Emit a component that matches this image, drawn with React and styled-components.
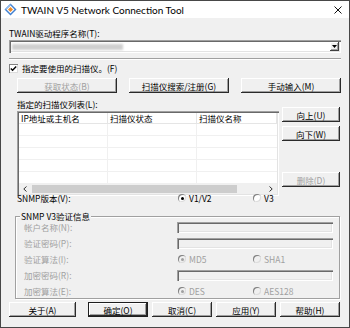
import styled, { createGlobalStyle } from "styled-components";

const GlobalStyle = createGlobalStyle`
  body {
    margin: 0;
    background: #fff;
  }
  * {
    box-sizing: border-box;
  }
`;

const Window = styled.div`
  width: 350px;
  height: 328px;
  border: 1px solid #474747;
  background: #f0f0f0;
  display: flex;
  flex-direction: column;
  font-family: "Noto Sans CJK SC", "Noto Sans", sans-serif;
  font-size: 8.5px;
  line-height: 10px;
  color: #000;
  overflow: hidden;
`;

const TitleBar = styled.div`
  height: 17px;
  flex-shrink: 0;
  background: #fff;
  display: flex;
  align-items: center;
  padding: 0 7px 0 3px;
`;

const Title = styled.div`
  flex: 1;
  margin-left: 4px;
  font-family: Lato, "Liberation Sans", sans-serif;
  font-size: 10px;
  line-height: 12px;
  color: #000;
`;

const Client = styled.div`
  flex: 1;
  display: flex;
  flex-direction: column;
  padding: 0 8px;
`;

const Label = styled.div`
  height: 10px;
  margin-top: ${(p) => p.$top || 0}px;
  padding-left: ${(p) => p.$indent || 0}px;
  color: ${(p) => (p.$disabled ? "#a0a0a0" : "#000")};
  white-space: nowrap;
`;

const Combo = styled.div`
  margin-top: 2px;
  height: 13px;
  background: #fff;
  display: flex;
  align-items: center;
  padding: 0 2px 0 3px;
  box-shadow: inset 1px 1px #a0a0a0, inset 2px 2px #696969,
    inset -1px -1px #fff, inset -2px -2px #e3e3e3;
`;

const Redacted = styled.div`
  width: 111px;
  height: 6px;
  background: #cfcfcf;
  filter: blur(0.8px);
`;

const DropButton = styled.div`
  margin-left: auto;
  width: 9px;
  height: 9px;
  background: #f0f0f0;
  display: flex;
  align-items: center;
  justify-content: center;
  box-shadow: inset -1px -1px #404040, inset 1px 1px #fff,
    inset -2px -2px #a0a0a0;
`;

const Separator = styled.div`
  margin-top: 5px;
  height: 2px;
  border-top: 1px solid #a0a0a0;
  border-bottom: 1px solid #fff;
`;

const CheckRow = styled.div`
  margin-top: 3px;
  height: 10px;
  display: flex;
  align-items: center;
  gap: 4px;
`;

const CheckBox = styled.div`
  width: 9px;
  height: 9px;
  background: #fff;
  display: flex;
  align-items: center;
  justify-content: center;
  box-shadow: inset 1px 1px #808080, inset -1px -1px #dcdcdc;
`;

const ButtonRow = styled.div`
  margin-top: 5px;
  padding-left: 8px;
  display: flex;
  gap: 12px;
`;

const Button = styled.div`
  width: ${(p) => p.$w}px;
  height: 15px;
  flex-shrink: 0;
  display: flex;
  align-items: center;
  justify-content: center;
  background: #f0f0f0;
  color: ${(p) => (p.$disabled ? "#a0a0a0" : "#000")};
  white-space: nowrap;
  border: ${(p) => (p.$default ? "1px solid #1e1e1e" : "none")};
  box-shadow: inset -1px -1px #2a2a2a, inset 1px 1px #fff,
    inset -2px -2px #a0a0a0;
`;

const ListSection = styled.div`
  margin-top: 6px;
  display: flex;
  height: 88px;
`;

const ListColumn = styled.div`
  flex: 1;
  padding-left: 8px;
  display: flex;
  flex-direction: column;
`;

const ListView = styled.div`
  margin-top: 2px;
  flex: 1;
  background: #fff;
  padding: 2px;
  display: flex;
  flex-direction: column;
  box-shadow: inset 1px 1px #a0a0a0, inset 2px 2px #696969,
    inset -1px -1px #fff, inset -2px -2px #e3e3e3;
`;

const HeaderRow = styled.div`
  display: grid;
  grid-template-columns: 89px 89px 1fr;
  height: 11px;
  flex-shrink: 0;
  border-bottom: 1px solid #e5e5e5;
`;

const HeaderCell = styled.div`
  padding-left: 2px;
  border-right: 1px solid #e5e5e5;
  white-space: nowrap;
`;

const RowArea = styled.div`
  flex: 1;
  overflow: hidden;
`;

const Row = styled.div`
  display: grid;
  grid-template-columns: 89px 89px 1fr;
  height: 12px;
  border-bottom: 1px solid #f0f0f0;
`;

const Cell = styled.div`
  border-right: 1px solid #f0f0f0;
`;

const ScrollBar = styled.div`
  height: 10px;
  flex-shrink: 0;
  background: #f0f0f0;
  display: flex;
  align-items: center;
  padding: 0 4px;
  gap: 5px;
`;

const Thumb = styled.div`
  width: 205px;
  height: 8px;
  background: #cdcdcd;
`;

const SideColumn = styled.div`
  width: 58px;
  margin: 0 1px 0 3px;
  padding-top: 8px;
  display: flex;
  flex-direction: column;
  gap: 4px;
`;

const Spacer = styled.div`
  flex: 1;
`;

const SnmpRow = styled.div`
  margin-top: 6px;
  height: 10px;
  padding-left: 8px;
  display: grid;
  grid-template-columns: 161px 75px 1fr;
  align-items: center;
`;

const RadioItem = styled.div`
  display: flex;
  align-items: center;
  gap: 3px;
  color: ${(p) => (p.$disabled ? "#a0a0a0" : "#000")};
  white-space: nowrap;
`;

const RadioDot = styled.div`
  width: 8px;
  height: 8px;
  border-radius: 50%;
  background: ${(p) => (p.$disabled ? "#f0f0f0" : "#fff")};
  box-shadow: inset 1px 1px #808080, inset -1px -1px #dcdcdc;
  display: flex;
  align-items: center;
  justify-content: center;
  &::after {
    content: "";
    width: 3px;
    height: 3px;
    border-radius: 50%;
    background: ${(p) =>
      p.$checked ? (p.$disabled ? "#a0a0a0" : "#000") : "transparent"};
  }
`;

const GroupBox = styled.fieldset`
  margin: 8px 1px 0 6px;
  padding: 0 6px 1px 3px;
  min-width: 0;
  border: 1px solid #a0a0a0;
  box-shadow: inset 1px 1px #fff, 1px 1px #fff;
`;

const Legend = styled.legend`
  padding: 0 1px;
  margin-left: 1px;
  height: 10px;
  line-height: 10px;
  background: #f0f0f0;
`;

const GroupGrid = styled.div`
  margin-top: 0;
  padding-left: 5px;
  display: grid;
  grid-template-columns: 153px 1fr;
  grid-auto-rows: 12px;
  row-gap: 4px;
  align-items: center;
`;

const TextBox = styled.div`
  height: 11px;
  background: #f0f0f0;
  box-shadow: inset 1px 1px #a0a0a0, inset 2px 2px #696969,
    inset -1px -1px #fff, inset -2px -2px #e3e3e3;
`;

const RadioPair = styled.div`
  display: grid;
  grid-template-columns: 75px 1fr;
  padding-left: 1px;
`;

const Footer = styled.div`
  margin-top: 3px;
  display: flex;
  gap: 4px;
`;

const TwainIcon = () => (
  <svg width="13" height="13" viewBox="0 0 13 13">
    <path d="M6.5 0.5 L12.5 6.5 L6.5 12.5 L0.5 6.5 Z" fill="#3f7fd0" />
    <path d="M6.5 2.5 L10.5 6.5 L6.5 10.5 L2.5 6.5 Z" fill="#fff" />
    <path d="M6.5 4 L9 6.5 L6.5 9 L4 6.5 Z" fill="#f08a24" />
    <path d="M1 6.5 L6.5 1 L6.5 2.5 L2.5 6.5 Z" fill="#9cc3ef" />
  </svg>
);

const CloseIcon = () => (
  <svg width="8" height="8" viewBox="0 0 8 8">
    <path d="M0.5 0.5 L7.5 7.5 M7.5 0.5 L0.5 7.5" stroke="#111" strokeWidth="1" />
  </svg>
);

const Chevron = ({ dir }) => (
  <svg width="4" height="6" viewBox="0 0 4 6">
    <path
      d={dir === "left" ? "M3.5 0.5 L0.8 3 L3.5 5.5" : "M0.5 0.5 L3.2 3 L0.5 5.5"}
      stroke="#333"
      strokeWidth="1"
      fill="none"
    />
  </svg>
);

const columns = ["IP地址或主机名", "扫描仪状态", "扫描仪名称"];
const emptyRows = [0, 1, 2, 3, 4];

const App = () => {
  return (
    <>
      <GlobalStyle />
      <Window>
        <TitleBar>
          <TwainIcon />
          <Title>TWAIN V5 Network Connection Tool</Title>
          <CloseIcon />
        </TitleBar>
        <Client>
          <Label $top={10}>TWAIN驱动程序名称(T):</Label>
          <Combo>
            <Redacted />
            <DropButton>
              <svg width="5" height="3" viewBox="0 0 5 3">
                <path d="M0 0 H5 L2.5 3 Z" fill="#000" />
              </svg>
            </DropButton>
          </Combo>
          <Separator />
          <CheckRow>
            <CheckBox>
              <svg width="7" height="7" viewBox="0 0 7 7">
                <path d="M0.8 3.4 L2.6 5.2 L6.2 1.4" stroke="#000" strokeWidth="1.4" fill="none" />
              </svg>
            </CheckBox>
            <span>指定要使用的扫描仪。(F)</span>
          </CheckRow>
          <ButtonRow>
            <Button $w={100} $disabled>获取状态(B)</Button>
            <Button $w={100}>扫描仪搜索/注册(G)</Button>
            <Button $w={100}>手动输入(M)</Button>
          </ButtonRow>
          <ListSection>
            <ListColumn>
              <Label>指定的扫描仪列表(L):</Label>
              <ListView>
                <HeaderRow>
                  {columns.map((c) => (
                    <HeaderCell key={c}>{c}</HeaderCell>
                  ))}
                </HeaderRow>
                <RowArea>
                  {emptyRows.map((r) => (
                    <Row key={r}>
                      <Cell />
                      <Cell />
                      <div />
                    </Row>
                  ))}
                </RowArea>
                <ScrollBar>
                  <Chevron dir="left" />
                  <Thumb />
                  <Spacer />
                  <Chevron dir="right" />
                </ScrollBar>
              </ListView>
            </ListColumn>
            <SideColumn>
              <Button $w={58}>向上(U)</Button>
              <Button $w={58}>向下(W)</Button>
              <Spacer />
              <Button $w={58} $disabled>删除(D)</Button>
            </SideColumn>
          </ListSection>
          <SnmpRow>
            <span>SNMP版本(V):</span>
            <RadioItem>
              <RadioDot $checked />
              V1/V2
            </RadioItem>
            <RadioItem>
              <RadioDot />
              V3
            </RadioItem>
          </SnmpRow>
          <GroupBox>
            <Legend>SNMP V3验证信息</Legend>
            <GroupGrid>
              <Label $disabled>帐户名称(N):</Label>
              <TextBox />
              <Label $disabled>验证密码(P):</Label>
              <TextBox />
              <Label $disabled>验证算法(I):</Label>
              <RadioPair>
                <RadioItem $disabled>
                  <RadioDot $checked $disabled />
                  MD5
                </RadioItem>
                <RadioItem $disabled>
                  <RadioDot $disabled />
                  SHA1
                </RadioItem>
              </RadioPair>
              <Label $disabled>加密密码(R):</Label>
              <TextBox />
              <Label $disabled>加密算法(E):</Label>
              <RadioPair>
                <RadioItem $disabled>
                  <RadioDot $checked $disabled />
                  DES
                </RadioItem>
                <RadioItem $disabled>
                  <RadioDot $disabled />
                  AES128
                </RadioItem>
              </RadioPair>
            </GroupGrid>
          </GroupBox>
          <Footer>
            <Button $w={67} style={{ marginRight: 8 }}>关于(A)</Button>
            <Button $w={60} $default>确定(O)</Button>
            <Button $w={60}>取消(C)</Button>
            <Button $w={60}>应用(Y)</Button>
            <Button $w={60}>帮助(H)</Button>
          </Footer>
        </Client>
      </Window>
    </>
  );
};

export default App;
